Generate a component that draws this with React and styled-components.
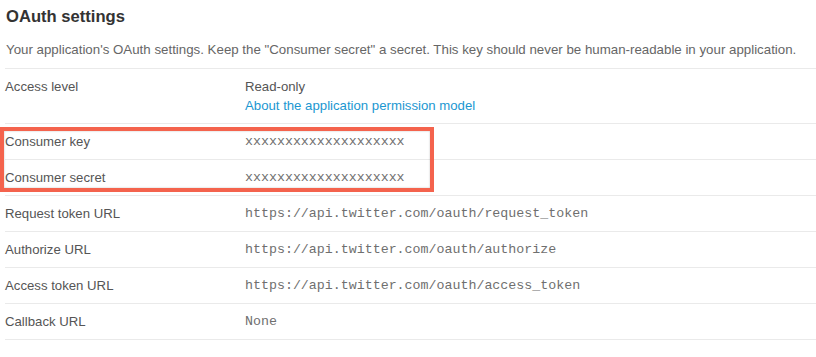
import React from 'react'
import styled, { createGlobalStyle } from 'styled-components'

const GlobalStyle = createGlobalStyle`
  body {
    margin: 0;
    background: #fff;
    font-family: "Liberation Sans", Arial, sans-serif;
  }
`

const Wrapper = styled.div`
  width: 816px;
  height: 357px;
  overflow: hidden;
  padding-left: 5px;
  box-sizing: border-box;
`

const Title = styled.h2`
  margin: 0;
  padding: 6px 0 0 1px;
  font-size: 16.6px;
  line-height: 22px;
  font-weight: bold;
  color: #333;
`

const Description = styled.p`
  margin: 0;
  padding: 13px 0 0 1px;
  box-sizing: border-box;
  height: 41px;
  font-size: 13.3px;
  line-height: 18px;
  color: #666;
  border-bottom: 1px solid #eaeaea;
`

const Table = styled.div`
  display: flex;
  flex-direction: column;
`

const Row = styled.div`
  display: grid;
  grid-template-columns: 240px 1fr;
  padding: 9px 0 8px;
  border-bottom: 1px solid #eaeaea;
  line-height: 18px;
  font-size: 13.2px;
`

const Label = styled.div`
  color: #555;
`

const Value = styled.div`
  color: #555;
  display: flex;
  flex-direction: column;
`

const Mono = styled.span`
  font-family: "Liberation Mono", "Courier New", monospace;
  font-size: 13.3px;
  color: #6f6f6f;
`

const Link = styled.a`
  color: #1b97d1;
  text-decoration: none;
  line-height: 19px;
`

const Highlight = styled.div`
  position: relative;
  margin-left: -5px;
  padding-left: 5px;

  &::after {
    content: '';
    position: absolute;
    left: 0;
    top: 3px;
    width: 434px;
    height: 65px;
    box-sizing: border-box;
    border: 4px solid #f4634d;
    box-shadow: inset 0 0 2px rgba(0, 0, 0, 0.25);
    pointer-events: none;
  }
`

const urlRows = [
  { label: 'Request token URL', value: 'https://api.twitter.com/oauth/request_token' },
  { label: 'Authorize URL', value: 'https://api.twitter.com/oauth/authorize' },
  { label: 'Access token URL', value: 'https://api.twitter.com/oauth/access_token' },
  { label: 'Callback URL', value: 'None' },
]

const App = () => {
  return (
    <Wrapper>
      <GlobalStyle />
      <Title>OAuth settings</Title>
      <Description>
        Your application's OAuth settings. Keep the "Consumer secret" a secret. This key should never be human-readable in your application.
      </Description>
      <Table>
        <Row>
          <Label>Access level</Label>
          <Value>
            <span>Read-only</span>
            <Link href="#">About the application permission model</Link>
          </Value>
        </Row>
        <Highlight>
          <Row>
            <Label>Consumer key</Label>
            <Value><Mono>xxxxxxxxxxxxxxxxxxxx</Mono></Value>
          </Row>
          <Row>
            <Label>Consumer secret</Label>
            <Value><Mono>xxxxxxxxxxxxxxxxxxxx</Mono></Value>
          </Row>
        </Highlight>
        {urlRows.map(row => (
          <Row key={row.label}>
            <Label>{row.label}</Label>
            <Value><Mono>{row.value}</Mono></Value>
          </Row>
        ))}
      </Table>
    </Wrapper>
  )
}

export default App
